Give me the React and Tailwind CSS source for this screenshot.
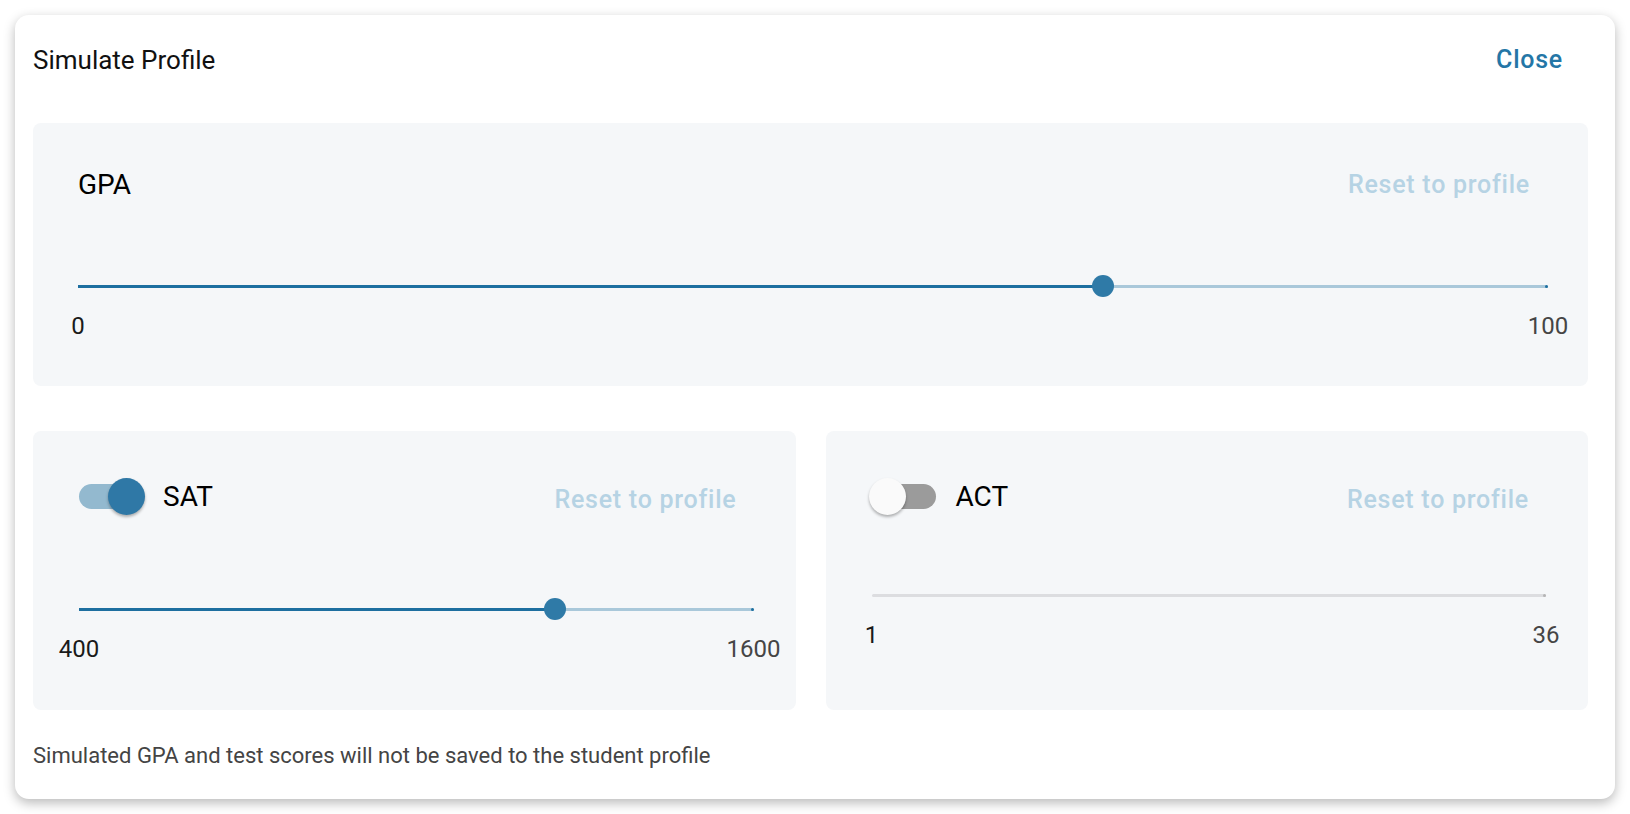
import React from "react";

const font = { fontFamily: "Roboto, 'Liberation Sans', sans-serif" };

function Toggle({ on }) {
  return (
    <div className="relative h-[37px] w-[70px] shrink-0">
      <div
        className={`absolute left-[3px] top-[6px] h-[25px] w-[64px] rounded-full ${
          on ? "bg-[#93b9cf]" : "bg-[#9b9b9b]"
        }`}
      />
      <div
        className={`absolute top-0 h-[37px] w-[37px] rounded-full shadow-[0_2px_3px_rgba(0,0,0,0.3)] ${
          on ? "left-[32px] bg-[#2f78a6]" : "left-0 bg-[#fafafa]"
        }`}
      />
    </div>
  );
}

function Slider({ value, min, max, disabled, pl, pr }) {
  const pct = `${value * 100}%`;
  return (
    <div className={`${pl} ${pr}`}>
      <div className="relative h-[22px]">
        <div
          className={`absolute left-0 right-0 top-[10px] h-[3px] rounded-full ${
            disabled ? "bg-[#dcdde0]" : "bg-[#a9c8da]"
          }`}
        />
        {!disabled && (
          <div
            className="absolute left-0 top-[10px] h-[3px] bg-[#1d6fa0]"
            style={{ width: pct }}
          />
        )}
        <div
          className={`absolute right-0 top-[10px] h-[3px] w-[3px] rounded-full ${
            disabled ? "bg-[#b5b5b5]" : "bg-[#1d6fa0]"
          }`}
        />
        {!disabled && (
          <div
            className="absolute top-0 h-[22px] w-[22px] -translate-x-1/2 rounded-full bg-[#2f7aa7]"
            style={{ left: pct }}
          />
        )}
      </div>
      <div className="relative mt-[17px] h-[24px] text-[24px] leading-[24px]">
        <span className="absolute left-0 top-0 -translate-x-1/2 text-[#1a1a1a]">{min}</span>
        <span className="absolute left-full top-0 -translate-x-1/2 text-[#454545]">{max}</span>
      </div>
    </div>
  );
}

function ResetButton({ className = "" }) {
  return (
    <button
      className={`text-[25px] font-medium leading-[30px] tracking-[0.03em] text-[#b6d3e4] ${className}`}
    >
      Reset to profile
    </button>
  );
}

function TestPanel({ label, on, value, min, max }) {
  return (
    <div className="h-[279px] rounded-lg bg-[#f5f7f9]">
      <div className="flex items-center justify-between pl-[43px] pr-[59px] pt-[46px]">
        <div className="flex items-center">
          <Toggle on={on} />
          <span className="ml-[17px] text-[28px] leading-[37px] text-black">{label}</span>
        </div>
        <ResetButton className="mt-[8px]" />
      </div>
      <div className={on ? "mt-[83px]" : "mt-[69px]"}>
        <Slider
          value={value}
          min={min}
          max={max}
          disabled={!on}
          pl="pl-[46px]"
          pr="pr-[42px]"
        />
      </div>
    </div>
  );
}

export default function App() {
  return (
    <div className="h-[814px] w-full bg-white p-[15px]" style={font}>
      <div className="flex h-[784px] flex-col rounded-[14px] bg-white pl-[18px] pr-[27px] shadow-[0_4px_12px_rgba(0,0,0,0.28)]">
        <div className="flex h-[108px] items-start justify-between pt-[30px]">
          <h1 className="text-[26px] leading-[30px] text-[#111]">Simulate Profile</h1>
          <button className="mr-[25px] text-[25px] font-medium leading-[30px] tracking-[0.03em] text-[#2476a6]">
            Close
          </button>
        </div>

        <div className="h-[263px] rounded-lg bg-[#f5f7f9]">
          <div className="flex items-center justify-between pl-[45px] pr-[58px] pt-[47px]">
            <span className="text-[28px] leading-[30px] text-black">GPA</span>
            <ResetButton />
          </div>
          <div className="mt-[75px]">
            <Slider value={0.697} min="0" max="100" pl="pl-[45px]" pr="pr-[40px]" />
          </div>
        </div>

        <div className="mt-[45px] grid grid-cols-2 gap-[30px]">
          <TestPanel label="SAT" on value={0.706} min="400" max="1600" />
          <TestPanel label="ACT" on={false} value={0} min="1" max="36" />
        </div>

        <p className="mt-[33px] text-[22px] leading-[26px] text-[#444]">
          Simulated GPA and test scores will not be saved to the student profile
        </p>
      </div>
    </div>
  );
}
